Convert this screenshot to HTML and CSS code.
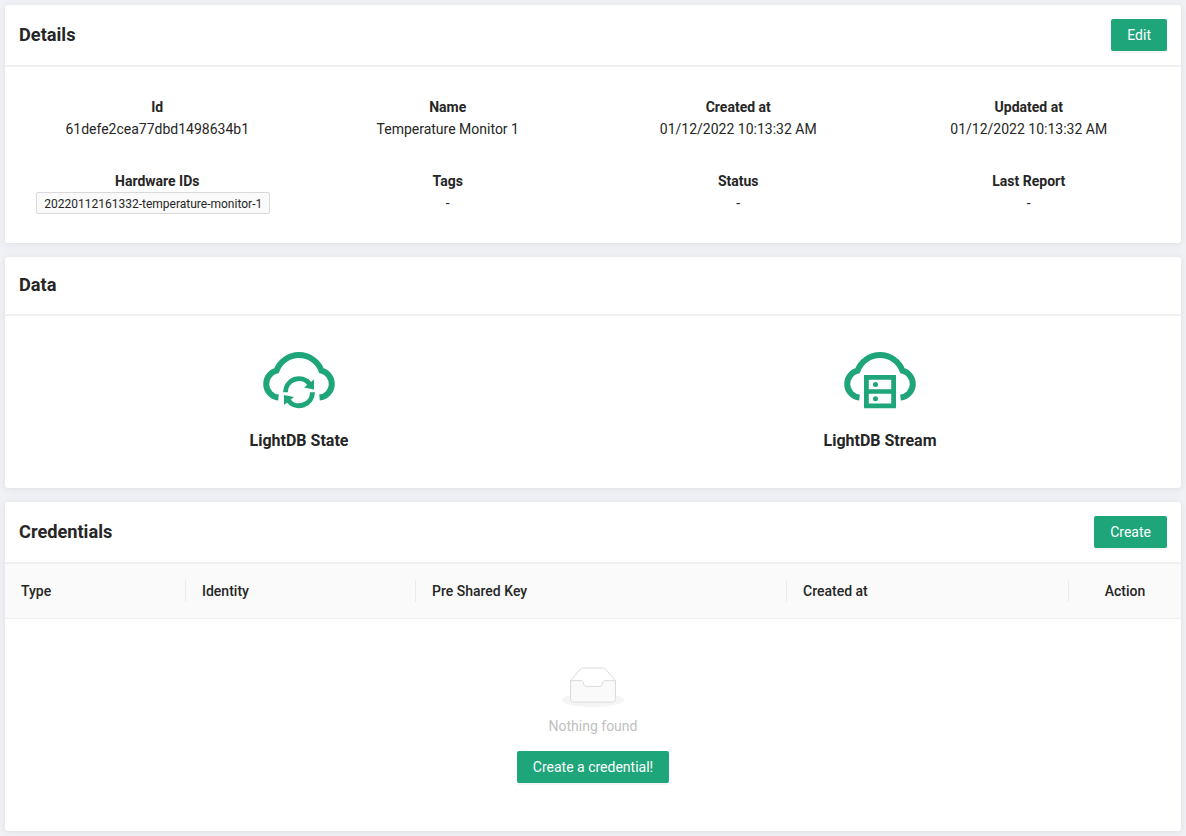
FILE: index.html
```html
<!DOCTYPE html>
<html lang="en">
<head>
<meta charset="utf-8">
<title>Device details</title>
<link rel="stylesheet" href="styles.css">
</head>
<body>
<main class="page">
  <section class="card details">
    <header class="card-head"><h2>Details</h2><button class="btn">Edit</button></header>
    <div class="facts">
      <div class="fact"><strong>Id</strong><span>61defe2cea77dbd1498634b1</span></div>
      <div class="fact"><strong>Name</strong><span>Temperature Monitor 1</span></div>
      <div class="fact"><strong>Created at</strong><span>01/12/2022 10:13:32 AM</span></div>
      <div class="fact"><strong>Updated at</strong><span>01/12/2022 10:13:32 AM</span></div>
      <div class="fact"><strong>Hardware IDs</strong><span class="tag">20220112161332-temperature-monitor-1</span></div>
      <div class="fact"><strong>Tags</strong><span>-</span></div>
      <div class="fact"><strong>Status</strong><span>-</span></div>
      <div class="fact"><strong>Last Report</strong><span>-</span></div>
    </div>
  </section>

  <section class="card data">
    <header class="card-head data-head"><h2>Data</h2></header>
    <div class="links">
      <a class="link">
        <svg class="cloud" viewBox="-36 0 72 57" width="72" height="57">
          <path class="line" d="M-20.5 45.6A13.7 13.7 0 0 1-22.5 18.7A24 24 0 0 1 22.5 18.7A13.7 13.7 0 0 1 20.5 45.6"/>
          <path class="arc" d="M-13.5 40.2A13.5 13.5 0 0 1 10.5 31.7M13.5 40.2A13.5 13.5 0 0 1-10.5 48.7"/>
          <path class="solid" d="M15 27.5V37.5L5 35.4ZM-15 52.9V42.9L-5 45Z"/>
        </svg>
        <span>LightDB State</span>
      </a>
      <a class="link">
        <svg class="cloud" viewBox="-36 0 72 57" width="72" height="57">
          <path class="line" d="M-20.5 45.6A13.7 13.7 0 0 1-22.5 18.7A24 24 0 0 1 22.5 18.7A13.7 13.7 0 0 1 20.5 45.6"/>
          <path class="solid" fill-rule="evenodd" d="M-16 23H16V56.3H-16ZM-11.2 27.7V37.2H11.2V27.7ZM-11.2 41.8V51.5H11.2V41.8Z"/>
          <circle class="solid" cx="-4.5" cy="32.4" r="2.5"/>
          <circle class="solid" cx="-4.5" cy="46.7" r="2.5"/>
        </svg>
        <span>LightDB Stream</span>
      </a>
    </div>
  </section>

  <section class="card credentials">
    <header class="card-head"><h2>Credentials</h2><button class="btn">Create</button></header>
    <div class="columns">
      <div class="col">Type</div>
      <div class="col">Identity</div>
      <div class="col">Pre Shared Key</div>
      <div class="col">Created at</div>
      <div class="col action">Action</div>
    </div>
    <div class="empty">
      <svg width="64" height="40" viewBox="0 0 64 41">
        <g transform="translate(0 1)" fill="none" fill-rule="evenodd">
          <ellipse fill="#f5f5f5" cx="32" cy="33" rx="32" ry="7"/>
          <g fill-rule="nonzero" stroke="#d9d9d9">
            <path d="M55 12.76L44.854 1.258C44.367.474 43.656 0 42.907 0H21.093c-.749 0-1.46.474-1.947 1.257L9 12.761V22h46v-9.24z"/>
            <path d="M41.613 15.931c0-1.605.994-2.93 2.227-2.931H55v18.137C55 33.26 53.68 35 52.05 35h-40.1C10.32 35 9 33.259 9 31.137V13h11.16c1.233 0 2.227 1.323 2.227 2.928v.022c0 1.605 1.005 2.901 2.237 2.901h14.752c1.232 0 2.237-1.308 2.237-2.913v-.007z" fill="#fafafa"/>
          </g>
        </g>
      </svg>
      <p>Nothing found</p>
      <button class="btn">Create a credential!</button>
    </div>
  </section>
</main>
</body>
</html>
```
FILE: styles.css
```css
* { box-sizing: border-box; }
body {
  margin: 0;
  background: #f0f1f5;
  color: #262626;
  font: 14px/22px Roboto, sans-serif;
}
.page {
  display: flex;
  flex-direction: column;
  gap: 14px;
  height: 836px;
  padding: 5px;
  overflow: hidden;
}
.card {
  flex: none;
  background: #fff;
  border-radius: 3px;
  box-shadow: 0 1px 7px rgba(0, 0, 0, .08);
  overflow: hidden;
}
.details { height: 238px; }
.data { height: 231px; }
.credentials { height: 329px; }
.card-head {
  display: flex;
  align-items: center;
  justify-content: space-between;
  height: 62px;
  padding: 0 14px;
  border-bottom: 2px solid #f0f0f0;
}
.data-head { height: 59px; padding-bottom: 1px; }
h2 {
  margin: 0;
  font-size: 18.2px;
  line-height: 28px;
  font-weight: 700;
}
.btn {
  height: 32px;
  padding: 0 16px;
  border: 0;
  border-radius: 2px;
  background: #1ea57a;
  box-shadow: 0 2px 0 rgba(0, 0, 0, .045);
  color: #fff;
  font: 14px/32px Roboto, sans-serif;
}
.facts {
  display: grid;
  grid-template-columns: repeat(4, 1fr);
  row-gap: 30px;
  padding: 29px 7px 0;
}
.fact {
  display: flex;
  flex-direction: column;
  align-items: center;
}
.fact strong { font-weight: 700; }
.tag {
  margin-right: 8px;
  padding: 2px 7px 0;
  border: 1px solid #d9d9d9;
  border-radius: 2px;
  background: #fafafa;
  font-size: 12px;
  line-height: 18px;
  white-space: nowrap;
}
.links {
  display: grid;
  grid-template-columns: 1fr 1fr;
  padding: 36px 10.5px 0 3.5px;
}
.link {
  display: flex;
  flex-direction: column;
  align-items: center;
  gap: 21px;
  font-size: 16px;
  font-weight: 700;
}
.cloud { overflow: visible; }
.line, .arc { fill: none; stroke: #1ea57a; }
.line { stroke-width: 6; }
.arc { stroke-width: 5; }
.solid { fill: #1ea57a; }
.columns {
  display: grid;
  grid-template-columns: 181px 230px 371px 282px 112px;
  padding: 16px 0;
  border-bottom: 1px solid #f0f0f0;
  background: #fafafa;
}
.col {
  padding-left: 16px;
  border-right: 1px solid rgba(0, 0, 0, .06);
  font-weight: 500;
}
.action {
  padding: 0;
  border: 0;
  text-align: center;
}
.empty {
  display: flex;
  flex-direction: column;
  align-items: center;
  padding-top: 48px;
}
.empty p {
  margin: 8px 0 14px;
  color: #bfbfbf;
}
```
